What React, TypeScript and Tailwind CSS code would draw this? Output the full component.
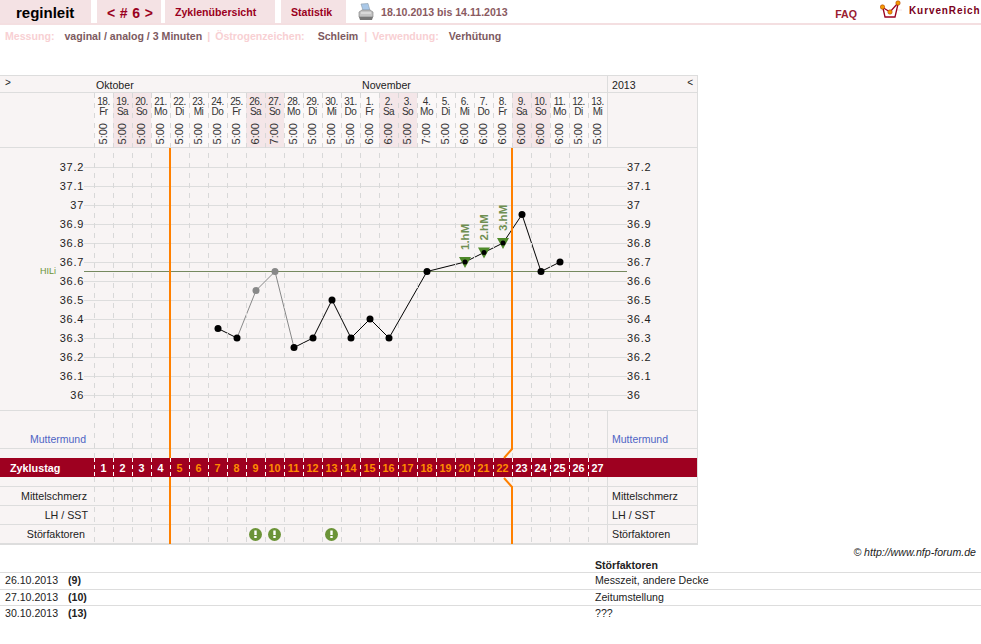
import { Fragment } from 'react'

const days = [
  ['18.', 'Fr', '5:00'], ['19.', 'Sa', '5:00'], ['20.', 'So', '5:00'], ['21.', 'Mo', '5:00'], ['22.', 'Di', '5:00'],
  ['23.', 'Mi', '5:00'], ['24.', 'Do', '5:00'], ['25.', 'Fr', '5:00'], ['26.', 'Sa', '6:00'], ['27.', 'So', '7:00'],
  ['28.', 'Mo', '5:00'], ['29.', 'Di', '5:00'], ['30.', 'Mi', '5:00'], ['31.', 'Do', '5:00'], ['1.', 'Fr', '6:00'],
  ['2.', 'Sa', '6:00'], ['3.', 'So', '5:00'], ['4.', 'Mo', '7:00'], ['5.', 'Di', '5:00'], ['6.', 'Mi', '6:00'],
  ['7.', 'Do', '6:00'], ['8.', 'Fr', '6:00'], ['9.', 'Sa', '6:00'], ['10.', 'So', '6:00'], ['11.', 'Mo', '6:00'],
  ['12.', 'Di', '5:00'], ['13.', 'Mi', '5:00'],
]

const temps = ['37.2', '37.1', '37', '36.9', '36.8', '36.7', '36.6', '36.5', '36.4', '36.3', '36.2', '36.1', '36']

const colX = (i: number) => 94 + 19 * i + 10
// chart svg starts at y=148 on the page
const tempY = (t: number) => 395 - 148 - (t - 36) * 190

const measured: [number, number, boolean?][] = [
  [6, 36.35], [7, 36.3], [8, 36.55, true], [9, 36.65, true], [10, 36.25], [11, 36.3], [12, 36.5], [13, 36.3],
  [14, 36.4], [15, 36.3], [17, 36.65], [19, 36.7], [20, 36.75], [21, 36.8], [22, 36.95], [23, 36.65], [24, 36.7],
]

const notes = [
  ['26.10.2013', '(9)', 'Messzeit, andere Decke'],
  ['27.10.2013', '(10)', 'Zeitumstellung'],
  ['30.10.2013', '(13)', '???'],
]

function Logo() {
  return (
    <svg width="22" height="20" viewBox="0 0 22 20" className="shrink-0">
      <path d="M0 10h22" stroke="#f4e2e4" />
      <path d="M3 8l2 9h10l3-13" fill="#fff" stroke="#9a0020" strokeWidth="1.3" />
      <path d="M2 7l8 5 8-9" fill="none" stroke="#9a0020" strokeWidth="1.3" />
      <circle cx="2.5" cy="7" r="2.2" fill="#f59a00" stroke="#b04000" strokeWidth=".6" />
      <circle cx="10" cy="12" r="2.2" fill="#f59a00" stroke="#b04000" strokeWidth=".6" />
      <circle cx="18" cy="3" r="2.2" fill="#f59a00" stroke="#b04000" strokeWidth=".6" />
    </svg>
  )
}

function Printer() {
  return (
    <svg width="16" height="18" viewBox="0 0 16 18" className="shrink-0">
      <path d="M3 1l7-.5 2 7H5z" fill="#a9c8e8" stroke="#8a9aa8" strokeWidth=".6" />
      <path d="M1 9l3-2h8l3 2v5H1z" fill="#c4c4c4" stroke="#777" strokeWidth=".6" />
      <path d="M1 14h14l-1 3H2z" fill="#777" />
      <path d="M3 10h10" stroke="#eee" />
    </svg>
  )
}

function Warn({ i }: { i: number }) {
  const x = colX(i) - 0.5
  return (
    <g>
      <circle cx={x} cy={441.5} r="6.5" fill="#6b9337" />
      <rect x={x - 1.2} y={437.5} width="2.4" height="4.5" fill="#fff" />
      <rect x={x - 1.2} y={443} width="2.4" height="2" fill="#fff" />
    </g>
  )
}

// dashed columns, cycle markers and störfaktor icons, drawn over the table rows
function Overlay() {
  return (
    <svg width="698" height="451" className="absolute left-0 top-[17px] pointer-events-none">
      {days.map((_, i) => (
        <Fragment key={i}>
          <line x1={94.5 + 19 * i} x2={94.5 + 19 * i} y1="0" y2="365" stroke="#d8d8d8" strokeDasharray="5 5" />
          <line x1={94.5 + 19 * i} x2={94.5 + 19 * i} y1="365" y2="384" stroke="#fff" strokeDasharray="4 3" />
          <line x1={94.5 + 19 * i} x2={94.5 + 19 * i} y1="384" y2="451" stroke="#d8d8d8" strokeDasharray="5 5" />
        </Fragment>
      ))}
      <line x1="170" x2="170" y1="55" y2="365" stroke="#ff8000" strokeWidth="2" />
      <line x1="170" x2="170" y1="384" y2="451" stroke="#ff8000" strokeWidth="2" />
      <path d="M512 55v301l-8 9" fill="none" stroke="#ff8000" strokeWidth="2" />
      <path d="M504 385l8 9v57" fill="none" stroke="#ff8000" strokeWidth="2" />
      <Warn i={8} />
      <Warn i={9} />
      <Warn i={12} />
    </svg>
  )
}

function Chart() {
  const ink = measured.slice(0, 2)
  const grey = measured.slice(1, 5)
  const rest = measured.slice(4)
  const pts = (list: typeof measured) => list.map(([i, t]) => `${colX(i)},${tempY(t)}`).join(' ')
  return (
    <svg width="698" height="263" className="block">
      {temps.map((t, n) => {
        const y = 19.5 + 19 * n
        return (
          <Fragment key={t}>
            <line x1="84" x2="627" y1={y} y2={y} stroke="#ddd" />
            <text x="84" y={y + 3} textAnchor="end" fontSize="11" fill="#222" letterSpacing=".7">{t}</text>
            <text x="627" y={y + 3} fontSize="11" fill="#222" letterSpacing=".7">{t}</text>
          </Fragment>
        )
      })}
      <line x1="84" x2="627" y1="123.5" y2="123.5" stroke="#76895f" />
      <text x="40" y="126" fontSize="9" fill="#6b9337">HILi</text>
      <polyline points={pts(ink)} fill="none" stroke="#000" />
      <polyline points={pts(grey)} fill="none" stroke="#888" />
      <polyline points={pts(rest)} fill="none" stroke="#000" />
      {[19, 20, 21].map((i, n) => {
        const x = colX(i)
        const y = tempY(36.7 + n * 0.05)
        return (
          <Fragment key={i}>
            <path d={`M${x - 6} ${y - 5}h12l-6 11z`} fill="#4f8a2a" />
            <text transform={`translate(${x + 4} ${y - 12}) rotate(-90)`} fontSize="11.5" fontWeight="700" fill="#6f8f52">
              {n + 1}.hM
            </text>
          </Fragment>
        )
      })}
      {measured.map(([i, t, light]) => (
        <circle key={i} cx={colX(i)} cy={tempY(t)} r={i >= 19 && i <= 21 ? 2.5 : 3.5} fill={light ? '#888' : '#000'} />
      ))}
    </svg>
  )
}

function SideRow({ label, className = '' }: { label: string; className?: string }) {
  return (
    <div className="flex h-[19px] border-b border-[#ddd] text-[10.7px] leading-[19px] text-[#222]">
      <div className={`w-[94px] text-right ${className}`}>{label}</div>
      <div className="w-[513px]" />
      <div className="w-[90px] border-l border-[#ddd] pl-[4px]">{label}</div>
    </div>
  )
}

export default function App() {
  return (
    <div className="w-[981px] h-[644px] overflow-hidden bg-white font-['Liberation_Sans',Arial,sans-serif] text-[#222]">
      <div className="flex h-[25px] items-start border-b-2 border-[#f4dfe1] font-bold text-[10.6px] text-[#9a0020]">
        <div className="w-[91px] h-[23px] bg-[#f4e2e4] pl-[16px] text-[15px] leading-[26px] text-black">reginleit</div>
        <div className="ml-[6px] w-[64px] h-[23px] bg-[#f4e2e4] pl-[10px] text-[14px] leading-[26px] tracking-[.4px]">&lt; # 6 &gt;</div>
        <div className="ml-[4px] w-[110px] h-[23px] bg-[#f4e2e4] pl-[10px] leading-[24px]">Zyklenübersicht</div>
        <div className="ml-[6px] w-[65px] h-[23px] bg-[#f4e2e4] pl-[10px] leading-[24px]">Statistik</div>
        <div className="ml-[12px] mt-[3px]"><Printer /></div>
        <div className="ml-[7px] leading-[25px] text-[#8a5a5f]">18.10.2013 bis 14.11.2013</div>
        <div className="ml-auto mt-[2px] leading-[24px] text-[#9a2030]">FAQ</div>
        <div className="ml-[23px]"><Logo /></div>
        <div className="ml-[7px] w-[72px] leading-[21px] text-[10px] tracking-[.9px] text-[#7a0020]">KurvenReich</div>
      </div>
      <div className="flex h-[50px] pl-[5px] pt-[4px] text-[10.6px] font-bold leading-[14px] text-[#7d5a5f]">
        <span className="text-[#f8d0d3]">Messung:</span>
        <span className="ml-[10px]">vaginal / analog / 3 Minuten</span>
        <span className="ml-[5px] text-[#f8d0d3]">|</span>
        <span className="ml-[5px] text-[#f8d0d3]">Östrogenzeichen:</span>
        <span className="ml-[13px]">Schleim</span>
        <span className="ml-[6px] text-[#f8d0d3]">|</span>
        <span className="ml-[5px] text-[#f8d0d3]">Verwendung:</span>
        <span className="ml-[10px]">Verhütung</span>
      </div>

      <div className="relative w-[698px] h-[470px] bg-[#f8f4f4] border-y border-r border-[#ddd]">
        <div className="flex h-[17px] border-b border-[#ddd] text-[10.6px] leading-[18px]">
          <div className="w-[94px] pl-[5px] text-[10px] leading-[14px]">&gt;</div>
          <div className="w-[266px] pl-[2px]">Oktober</div>
          <div className="w-[247px] pl-[2px]">November</div>
          <div className="flex w-[90px] justify-between border-l border-[#ddd] pl-[4px] pr-[4px]">
            <span>2013</span>
            <span className="text-[10px] leading-[14px]">&lt;</span>
          </div>
        </div>
        <div className="flex h-[55px] border-b border-[#ddd]">
          <div className="w-[94px]" />
          {days.map(([d, w, time]) => (
            <div
              key={d + w}
              className={`flex w-[19px] flex-col items-center pt-[4px] text-[10px] leading-[10px] tracking-[-.5px] text-[#333] ${w === 'Sa' || w === 'So' ? 'bg-[#f4e6e8]' : 'bg-[#fbf8f8]'}`}
            >
              <span>{d}</span>
              <span>{w}</span>
              <span className="mt-[6px] rotate-180 text-[11px] leading-[11px] tracking-normal [writing-mode:vertical-rl]">{time}</span>
            </div>
          ))}
          <div className="flex-1 border-l border-[#ddd]" />
        </div>
        <div className="h-[263px] border-b border-[#ddd]">
          <Chart />
        </div>
        <div className="h-[38px] border-b border-[#ddd] text-[10.5px] text-[#4f64c4]">
          <div className="flex h-full items-end">
            <div className="w-[86px] text-right">Muttermund</div>
            <div className="w-[521px]" />
            <div className="h-full w-[90px] border-l border-[#ddd] pl-[4px] pt-[21px]">Muttermund</div>
          </div>
        </div>
        <div className="flex h-[9px]">
          <div className="w-[607px]" />
          <div className="flex-1 border-l border-[#ddd]" />
        </div>
        <div className="flex h-[19px] bg-[#9e0020] text-[10.8px] font-bold leading-[20px] text-white">
          <div className="w-[94px] pl-[10px]">Zyklustag</div>
          {days.map((_, i) => (
            <div key={i} className={`w-[19px] text-center ${i >= 4 && i <= 21 ? 'text-[#ff8c00]' : 'text-white'}`}>{i + 1}</div>
          ))}
          <div className="flex-1" />
        </div>
        <div className="flex h-[10px] border-b border-[#ddd]">
          <div className="w-[607px]" />
          <div className="flex-1 border-l border-[#ddd]" />
        </div>
        <SideRow label="Mittelschmerz" className="pr-[7px]" />
        <SideRow label="LH / SST" className="pr-[6px]" />
        <SideRow label="Störfaktoren" className="pr-[9px]" />
        <Overlay />
      </div>

      <div className="h-[13px] pr-[5px] text-right text-[10.6px] italic leading-[14px]">© http://www.nfp-forum.de</div>
      <div className="text-[10.6px] leading-[15px] text-[#222]">
        <div className="flex h-[15px] border-b border-[#ddd] font-bold">
          <div className="w-[595px]" />
          <div>Störfaktoren</div>
        </div>
        {notes.map(([date, day, text]) => (
          <div key={date} className="flex h-[16.5px] border-b border-[#ddd] last:border-b-0">
            <div className="w-[68px] pl-[5px]">{date}</div>
            <div className="w-[527px] font-bold">{day}</div>
            <div>{text}</div>
          </div>
        ))}
      </div>
    </div>
  )
}
